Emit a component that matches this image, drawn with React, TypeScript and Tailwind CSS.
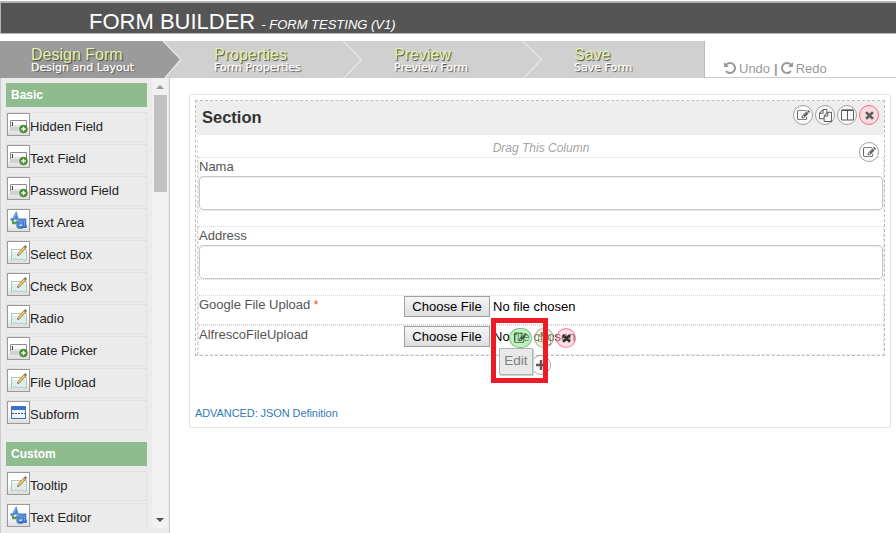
import React from "react";

const Svg = ({ d, box, className }: { d: string; box: string; className: string }) => (
  <svg viewBox={box} className={className} fill="currentColor"><path d={d} /></svg>
);

const UNDO = "M1536 896q0 156 -61 298t-164 245t-245 164t-298 61q-172 0 -327 -72.5t-264 -204.5q-7 -10 -6.5 -22.5t8.5 -20.5l137 -138q10 -9 25 -9q16 2 23 12q73 95 179 147t225 52q104 0 198.5 -40.5t163.5 -109.5t109.5 -163.5t40.5 -198.5t-40.5 -198.5t-109.5 -163.5t-163.5 -109.5t-198.5 -40.5q-98 0 -188 35.5t-160 101.5l137 138q31 30 14 69q-17 40 -59 40h-448q-26 0 -45 -19t-19 -45v-448q0 -42 40 -59q39 -17 69 14l130 129q107 -101 244.5 -156.5t284.5 -55.5q156 0 298 61t245 164t164 245t61 298z";
const EDIT = "M888 1184l116 -116l-152 -152l-116 116v56h96v96h56zM1328 464q-16 -16 -33 1l-350 350q-17 17 -1 33t33 -1l350 -350q17 -17 1 -33zM1408 1058v190q0 119 -84.5 203.5t-203.5 84.5h-832q-119 0 -203.5 -84.5t-84.5 -203.5v-832q0 -119 84.5 -203.5t203.5 -84.5h832q63 0 117 25q15 7 18 23q3 17 -9 29l-49 49q-14 14 -32 8q-23 -6 -45 -6h-832q-66 0 -113 47t-47 113v832q0 66 47 113t113 47h832q66 0 113 -47t47 -113v-126q0 -13 9 -22l64 -64q15 -15 35 -7t20 29zM1312 320l288 288l-672 672h-288v-288zM1756 452l-92 92l-288 -288l92 -92q28 -28 68 -28t68 28l152 152q28 28 28 68t-28 68z";
const COPY = "M1696 384q40 0 68 28t28 68v1216q0 40 -28 68t-68 28h-960q-40 0 -68 -28t-28 -68v-288h-544q-40 0 -68 -28t-28 -68v-672q0 -40 20 -88t48 -76l408 -408q28 -28 76 -48t88 -20h416q40 0 68 28t28 68v328q68 -40 128 -40h416zM1152 597l-299 299h299v-299zM512 213l-299 299h299v-299zM708 860l316 -316v-416h-384v416q0 40 -28 68t-68 28h-416v640h512v-256q0 -40 20 -88t48 -76zM1664 1664v-1152h-384v416q0 40 -28 68t-68 28h-416v640h896z";

const EditIcon = () => <Svg d={EDIT} box="0 0 1792 1664" className="h-[12px] w-[13px]" />;
const CopyIcon = () => <Svg d={COPY} box="0 0 1792 1792" className="size-[13px]" />;
const ColumnsIcon = () => (
  <svg viewBox="0 0 13 12" className="h-3 w-[13px]" fill="none" stroke="currentColor">
    <path d="M.5 1.5h12v9.500H.5zM6.5 1.5v9.500M.5 .8h12" />
  </svg>
);
const CrossIcon = () => (
  <svg viewBox="0 0 10 10" className="size-[9px]" stroke="currentColor" strokeWidth="3"><path d="M1.2 1.2 8.8 8.8M8.8 1.2 1.2 8.8" /></svg>
);
const PlusIcon = () => (
  <svg viewBox="0 0 10 10" className="size-[10px]" stroke="currentColor" strokeWidth="2.5"><path d="M0 5h10M5 0v10" /></svg>
);

const Round = ({ children, tone = "border-[#a0a0a0] bg-white/70" }: { children: React.ReactNode; tone?: string }) => (
  <span className={`flex size-5 shrink-0 items-center justify-center rounded-full border text-[#5c5c5c] ${tone}`}>{children}</span>
);

const InputArt = () => (
  <svg viewBox="0 0 19 19" className="size-[19px]">
    <rect x="1" y="10" width="17" height="6" fill="#d2d2d2" />
    <path d="M1.500 12V5.500h16V12" fill="#fafafa" stroke="#8c8c8c" />
    <rect x="2" y="10" width="15" height="2" fill="#e2e2e2" />
    <path d="M3.500 7v4" stroke="#444" />
    <circle cx="14.500" cy="14" r="3.900" fill="#4e9434" stroke="#3c7429" strokeWidth=".6" />
    <path d="M14.500 11.800v4.400M12.300 14h4.400" stroke="#fff" strokeWidth="1.300" />
  </svg>
);
const PencilArt = () => (
  <svg viewBox="0 0 19 19" className="size-[19px]">
    <path d="M2.500 6.500h15v10.500h-3l-1-1h-2l-1 1h-2l-1-1h-2l-1 1h-2z" fill="#dfedec" stroke="#b3c2c3" />
    <path d="M3 8h13" stroke="#f4fafa" strokeWidth="2" />
    <path d="M10 11 15.800 4.500" stroke="#a97a34" strokeWidth="2.800" />
    <path d="M10.200 10.800 15.500 4.800" stroke="#f8d162" strokeWidth="1.500" />
    <path d="M15.600 4.700 17.300 2.900" stroke="#858074" strokeWidth="2.800" />
    <path d="M8.200 13l.7-2.200 1.500 1.400z" fill="#543" />
  </svg>
);
const LettersArt = () => (
  <svg viewBox="0 0 19 19" className="size-[19px]" fill="none">
    <path d="M1.500 8.500H4L7 3l1.500 5M4 7.500h4.500" stroke="#4a86d4" strokeWidth="2.300" />
    <path d="M4.500 7.500 7 3" stroke="#86bcf4" strokeWidth="1" />
    <path d="M4 9.500v2.500h2.500l2-2" stroke="#559f53" strokeWidth="2.300" />
    <path d="M8.500 9h7.300v6.500h2" stroke="#3a73c6" strokeWidth="2.900" />
    <path d="M15 12h-4q-2.200 0-2.200 2.200t2.200 2.200h2l2.500-2" stroke="#3a73c6" strokeWidth="2.900" />
    <path d="M9 9h6.500v6M14.500 12H11q-2 0-2 2.200t2 1.800" stroke="#69a0e4" strokeWidth="1" />
  </svg>
);
const SubformArt = () => (
  <svg viewBox="0 0 19 19" className="size-[19px]">
    <rect x="2.500" y="3.500" width="14" height="12" fill="#eef4fc" stroke="#456bb5" />
    <rect x="2" y="3" width="15" height="4" fill="#3f70ca" />
    <path d="M3 10.500h13" stroke="#555" strokeDasharray="2 1" />
  </svg>
);

const art = { input: InputArt, pencil: PencilArt, letters: LettersArt, subform: SubformArt };
type Kind = keyof typeof art;

const basic: [string, Kind][] = [
  ["Hidden Field", "input"], ["Text Field", "input"], ["Password Field", "input"], ["Text Area", "letters"],
  ["Select Box", "pencil"], ["Check Box", "pencil"], ["Radio", "pencil"], ["Date Picker", "input"],
  ["File Upload", "pencil"], ["Subform", "subform"],
];
const custom: [string, Kind][] = [["Tooltip", "pencil"], ["Text Editor", "letters"]];

const Palette = ({ title, items }: { title: string; items: [string, Kind][] }) => (
  <div>
    <h3 className="mb-[5px] h-6 bg-[#8fbc8f] pl-[5px] text-[12px] leading-6 font-bold text-white">{title}</h3>
    <ul className="flex flex-col gap-[2px]">
      {items.map(([label, kind]) => {
        const Art = art[kind];
        return (
          <li key={label} className="flex h-[30px] border border-dotted border-[#d8d8d8] text-[13px] text-[#222]">
            <span className="flex size-[23px] shrink-0 items-center justify-center border border-[#9a9a9a] bg-linear-to-b from-white from-50% to-[#ddd]"><Art /></span>
            <span className="leading-[27px] whitespace-nowrap">{label}</span>
          </li>
        );
      })}
    </ul>
  </div>
);

const steps = [["Design Form", "Design and Layout"], ["Properties", "Form Properties"], ["Preview", "Preview Form"], ["Save", "Save Form"]];
const stepWidths = ["w-[183px] pl-[31px]", "w-[180px] pl-[31px]", "w-[180px] pl-[31px]", "w-[161px] pl-[31px]"];

const TextRow = ({ label }: { label: string }) => (
  <div className="h-[54px] border border-dotted border-[#d8d8d8]">
    <div className="h-[18px] leading-[18px]">{label}</div>
    <div className="h-[34px] rounded-[4px] border border-[#c8c8c8] bg-white shadow-[inset_0_1px_1px_rgba(0,0,0,0.075)]" />
  </div>
);

const FileRow = ({ label, required, children }: { label: string; required?: boolean; children?: React.ReactNode }) => (
  <div className="relative flex h-[30px] border border-dotted border-[#d8d8d8]">
    <div className="w-[205px] leading-[18px]">{label}{required && <span className="text-[12px] text-[#ee4b25]"> *</span>}</div>
    <div className="flex h-[21px] w-[86px] items-center justify-center border border-[#a0a0a0] bg-linear-to-b from-[#f6f6f6] to-[#dedede] text-black">Choose File</div>
    <div className="pl-[3px] leading-[21px] text-black">No file chosen</div>
    {children}
  </div>
);

export default function App() {
  return (
    <div className="flex h-[533px] w-[896px] flex-col overflow-hidden bg-white font-['Liberation_Sans',Arial,sans-serif] text-[13px] text-[#555]">
      <header className="mt-px flex h-[33px] shrink-0 items-baseline border-t-2 border-b border-l border-[#b4b4b4] bg-[#555] pl-[88px] text-white">
        <h1 className="text-[22px] leading-[37px]">FORM BUILDER</h1>
        <span className="ml-[6px] text-[13px] italic">- FORM TESTING (V1)</span>
      </header>
      <nav className="mt-[7px] flex h-[37px] shrink-0">
        <div className="relative flex w-[705px] border-r border-[#bcbcbc] bg-[#d0d0d0]">
          <svg viewBox="0 0 704 37" className="absolute inset-0 h-[37px] w-[704px]" fill="none">
            <path d="M0 0H163L180 18.500 164 37H0z" fill="#9b9b9b" />
            <path d="M163 0 181 18.500 165 37" stroke="#e8e8e8" strokeWidth="1.200" />
            <path d="M343 0 361.500 18.500 344 37M523 0 541.500 18.500 524 37" stroke="#e8e8e8" strokeWidth="1.100" />
          </svg>
          {steps.map(([title, sub], i) => (
            <div key={title} className={`relative shrink-0 whitespace-nowrap ${stepWidths[i]}`}>
              <div className="pt-[5px] text-[16px] leading-[17px] text-[#e4f4a8] [text-shadow:1px_1px_1px_#444]">{title}</div>
              <div className="font-['DejaVu_Sans',Verdana,sans-serif] text-[11px] leading-[10px] text-white [-webkit-text-stroke:0.25px_white] [text-shadow:1px_1px_1px_#444]">{sub}</div>
            </div>
          ))}
        </div>
        <div className="flex flex-1 items-end gap-[3px] border-b border-[#ccc] pb-[1px] pl-[19px] leading-[15px] text-[#999]">
          <Svg d={UNDO} box="0 128 1536 1536" className="mb-[2px] size-[12px]" />
          <span>Undo</span><b className="px-px">|</b>
          <Svg d={UNDO} box="0 128 1536 1536" className="-ml-px mb-[2px] size-[12px] -scale-x-100" />
          <span>Redo</span>
        </div>
      </nav>
      <div className="flex min-h-0 flex-1">
        <aside className="flex w-[170px] shrink-0 border-r border-l border-[#ccc] bg-[#ebebeb] pb-[5px]">
          <div className="ml-[5px] flex w-[141px] flex-col gap-3 overflow-hidden pt-[5px]">
            <Palette title="Basic" items={basic} />
            <Palette title="Custom" items={custom} />
          </div>
          <div className="ml-[5px] flex w-4 flex-col items-center justify-between bg-[#f1f1f1] pt-[7px] pb-[6px]">
            <div className="flex flex-col items-center gap-[6px]">
              <svg viewBox="0 0 8 4" className="h-1 w-2"><path d="M0 4 4 0 8 4z" fill="#999" /></svg>
              <div className="h-[97px] w-[13px] bg-[#c1c1c1]" />
            </div>
            <svg viewBox="0 0 8 4" className="h-1 w-2"><path d="M0 0 4 4 8 0z" fill="#505050" /></svg>
          </div>
        </aside>
        <main className="pt-4 pl-[19px]">
          <div className="h-[334px] w-[702px] rounded-[2px] border border-[#e5e5e5] p-[5px]">
            <section className="h-[256px] border border-dashed border-[#bdbdbd]">
              <div className="flex h-[34px] justify-between bg-[#eee] pt-1 pr-[5px] pl-[6px]">
                <h2 className="text-[16.500px] leading-[25px] font-bold text-[#333]">Section</h2>
                <div className="flex gap-[2px]">
                  <Round><EditIcon /></Round><Round><CopyIcon /></Round><Round><ColumnsIcon /></Round>
                  <Round tone="border-[#ff6684] bg-[#f8dce1]"><CrossIcon /></Round>
                </div>
              </div>
              <div className="mt-[5px] ml-px h-[215px] border-l border-dashed border-[#d2d2d2]">
                <div className="relative h-[17px] text-center text-[12px] leading-4 text-[#a4a4a4] italic">
                  Drag This Column
                  <span className="absolute top-[2px] right-[5px] z-10"><Round tone="border-[#a0a0a0] bg-white"><EditIcon /></Round></span>
                </div>
                <div className="flex flex-col">
                  <TextRow label="Nama" />
                  <div className="h-[15px]" />
                  <TextRow label="Address" />
                  <div className="h-[15px]" />
                  <FileRow label="Google File Upload" required />
                  <FileRow label="AlfrescoFileUpload">
                    <div className="absolute top-[2px] left-[310px] flex items-center gap-[2px]">
                      <span className="flex h-5 w-[23px] items-center justify-center rounded-full border border-[#7fa77f]/80 bg-[#90ee90]/60 text-[#333]/80"><EditIcon /></span>
                      <span className="flex h-5 w-5 items-center justify-center rounded-full border border-[#999]/80 bg-[#f4f4c8]/50 text-[#555]/50"><CopyIcon /></span>
                      <span className="flex h-5 w-5 items-center justify-center rounded-full border border-[#ff6684]/80 bg-[#ffc0cb]/50 text-[#222]/90"><CrossIcon /></span>
                    </div>
                    <span className="absolute top-[29px] left-[332px]"><Round tone="border-[#aaa] bg-white/80"><PlusIcon /></Round></span>
                    <span className="absolute top-[22px] left-[300px] flex h-[27px] w-[34px] items-center justify-center rounded-[1px] border border-[#b4b4b4] bg-[#e9e9e9] text-[13.500px] text-[#808080] shadow-[1px_1px_1px_#ccc]">Edit</span>
                    <span className="absolute top-[-8px] left-[292px] h-[65px] w-[57px] border-[5px] border-[#ed1c24]" />
                  </FileRow>
                </div>
              </div>
            </section>
            <a className="mt-[50px] block text-[11px] leading-[14px] tracking-[-0.08px] text-[#337ab7]">ADVANCED: JSON Definition</a>
          </div>
        </main>
      </div>
    </div>
  );
}
